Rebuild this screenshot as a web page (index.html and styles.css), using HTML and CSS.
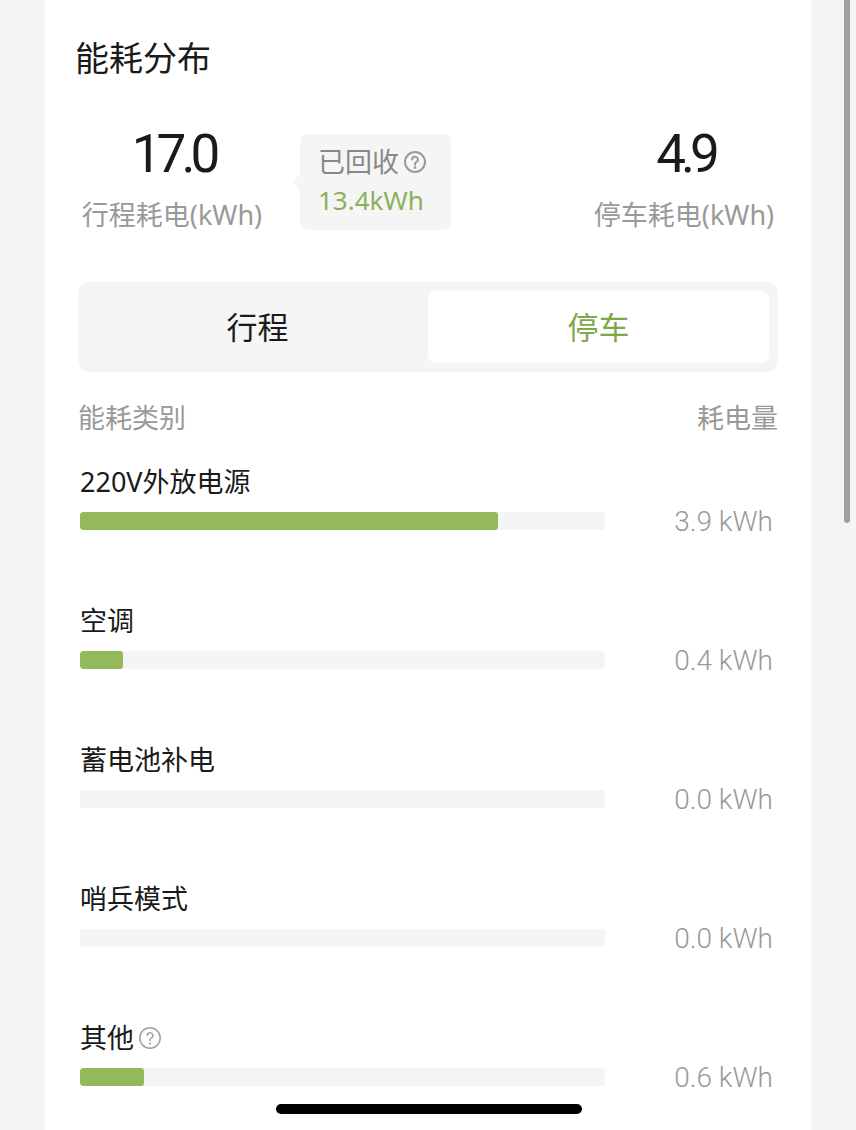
FILE: index.html
```html
<!DOCTYPE html>
<html>
<head>
<meta charset="UTF-8">
<title>能耗分布</title>

	<link rel="stylesheet" href="styles.css">

</head>
<body>

	<div class="page">
		<div class="card">
			<div class="title">能耗分布</div>

			<div class="stats">
				<div class="stat">
					<div class="num">17.0</div>
					<div class="lbl">行程耗电(kWh)</div>
				</div>
				<div class="tip">
					<div class="tip-head">已回收
						<svg class="help" viewBox="0 0 24 24" width="24" height="24">
							<circle cx="12" cy="12" r="10" fill="none" stroke="#9a9a9a" stroke-width="2"/>
							<path d="M9.1 9.6a2.9 2.9 0 1 1 4.1 2.6c-.8.4-1.2 1-1.2 1.9v.6" fill="none" stroke="#9a9a9a" stroke-width="2" stroke-linecap="round"/>
							<circle cx="12" cy="17.6" r="1.3" fill="#9a9a9a"/>
						</svg>
					</div>
					<div class="tip-val">13.4kWh</div>
				</div>
				<div class="stat right">
					<div class="num">4.9</div>
					<div class="lbl">停车耗电(kWh)</div>
				</div>
			</div>

			<div class="seg">
				<div class="seg-item">行程</div>
				<div class="seg-item on">停车</div>
			</div>

			<div class="head">
				<span>能耗类别</span>
				<span>耗电量</span>
			</div>

			<div class="row">
				<div class="name">220V外放电源</div>
				<div class="line">
					<div class="track"><div class="fill" style="width:79.6%"></div></div>
					<div class="val">3.9 kWh</div>
				</div>
			</div>
			<div class="row">
				<div class="name">空调</div>
				<div class="line">
					<div class="track"><div class="fill" style="width:8.2%"></div></div>
					<div class="val">0.4 kWh</div>
				</div>
			</div>
			<div class="row">
				<div class="name">蓄电池补电</div>
				<div class="line">
					<div class="track"><div class="fill" style="width:0%"></div></div>
					<div class="val">0.0 kWh</div>
				</div>
			</div>
			<div class="row">
				<div class="name">哨兵模式</div>
				<div class="line">
					<div class="track"><div class="fill" style="width:0%"></div></div>
					<div class="val">0.0 kWh</div>
				</div>
			</div>
			<div class="row">
				<div class="name">其他
					<svg class="help" viewBox="0 0 24 24" width="24" height="24">
						<circle cx="12" cy="12" r="10.2" fill="none" stroke="#a0a0a0" stroke-width="1.5"/>
						<path d="M9.3 9.6a2.8 2.8 0 1 1 4 2.5c-.8.4-1.3 1-1.3 1.9v.6" fill="none" stroke="#a0a0a0" stroke-width="1.5" stroke-linecap="round"/>
						<circle cx="12" cy="17.5" r="1.1" fill="#a0a0a0"/>
					</svg>
				</div>
				<div class="line">
					<div class="track"><div class="fill" style="width:12.2%"></div></div>
					<div class="val">0.6 kWh</div>
				</div>
			</div>
		</div>
	</div>

	<!-- 스크롤바, 홈 인디케이터 -->
	<div class="scrollbar"></div>
	<div class="home"></div>

</body>
</html>
```

FILE: styles.css
```css
html, body{
	margin: 0;
	height: 100%;
	overflow: hidden;
}
body{
	background-color: #f4f4f4;
	font-family: "Noto Sans", "Noto Sans CJK SC", sans-serif;
	color: #1a1a1a;
}
.page{
	padding-left: 45px;
}
.card{
	width: 700px;
	min-height: 1200px;
	padding: 36px 33px 0 33px;
	background-color: #fff;
}
.title{
	margin-left: -3px;
	font-size: 34px;
	line-height: 44px;
}

/* 상단 통계 */
.stats{
	display: flex;
	align-items: flex-start;
	margin-top: 44px;
}
.stat{
	width: 188px;
	text-align: center;
}
.stat.right{
	margin-left: auto;
}
.num{
	font-family: "Roboto", sans-serif;
	font-size: 53px;
	line-height: 60px;
	letter-spacing: -5px;
	text-indent: 3px;
	color: #1a1a1a;
}
.lbl{
	margin-top: 14px;
	font-size: 27px;
	line-height: 34px;
	color: #999;
	white-space: nowrap;
}
.tip{
	position: relative;
	margin: 10px 0 0 34px;
	width: 151px;
	height: 96px;
	padding-left: 18px;
	box-sizing: border-box;
	background-color: #f5f5f5;
	border-radius: 8px;
}
.tip:before{
	content: "";
	position: absolute;
	left: -7px;
	top: 40px;
	border-top: 8px solid transparent;
	border-bottom: 8px solid transparent;
	border-right: 7px solid #f5f5f5;
}
.tip-head{
	display: flex;
	align-items: center;
	padding-top: 12px;
	font-size: 27px;
	line-height: 32px;
	color: #888;
	white-space: nowrap;
}
.tip-head .help{
	margin-left: 4px;
}
.tip-val{
	margin-top: 6px;
	font-size: 26px;
	line-height: 32px;
	color: #8bb158;
}

/* 탭 */
.seg{
	display: flex;
	margin-top: 50px;
	padding: 9px;
	background-color: #f5f5f5;
	border-radius: 10px;
}
.seg-item{
	flex: 1;
	height: 72px;
	line-height: 72px;
	text-align: center;
	font-size: 31px;
	color: #1a1a1a;
	border-radius: 8px;
}
.seg-item.on{
	background-color: #fff;
	color: #7ea84a;
}

.head{
	display: flex;
	justify-content: space-between;
	margin-top: 28px;
	font-size: 27px;
	line-height: 36px;
	color: #999;
}

/* 항목 */
.row{
	margin-top: 28px;
	margin-bottom: 73px;
}
.name{
	display: flex;
	align-items: center;
	padding-left: 2px;
	font-size: 27px;
	line-height: 36px;
	margin-bottom: 12px;
}
.name .help{
	margin-left: 4px;
}
.line{
	display: flex;
	align-items: center;
	height: 18px;
}
.track{
	width: 525px;
	height: 18px;
	margin-left: 2px;
	background-color: #f5f5f5;
	border-radius: 3px;
	overflow: hidden;
}
.fill{
	height: 100%;
	background-color: #94b95a;
	border-radius: 3px;
}
.val{
	margin-left: auto;
	margin-right: 5px;
	font-family: "Roboto", sans-serif;
	font-weight: 300;
	font-size: 28px;
	color: #999;
}

.scrollbar{
	position: fixed;
	top: 0;
	right: 6px;
	width: 6px;
	height: 523px;
	background-color: #a0a0a0;
	border-radius: 0 0 3px 3px;
}
.home{
	position: fixed;
	left: 276px;
	top: 1104px;
	width: 306px;
	height: 10px;
	background-color: #000;
	border-radius: 5px;
}
```
